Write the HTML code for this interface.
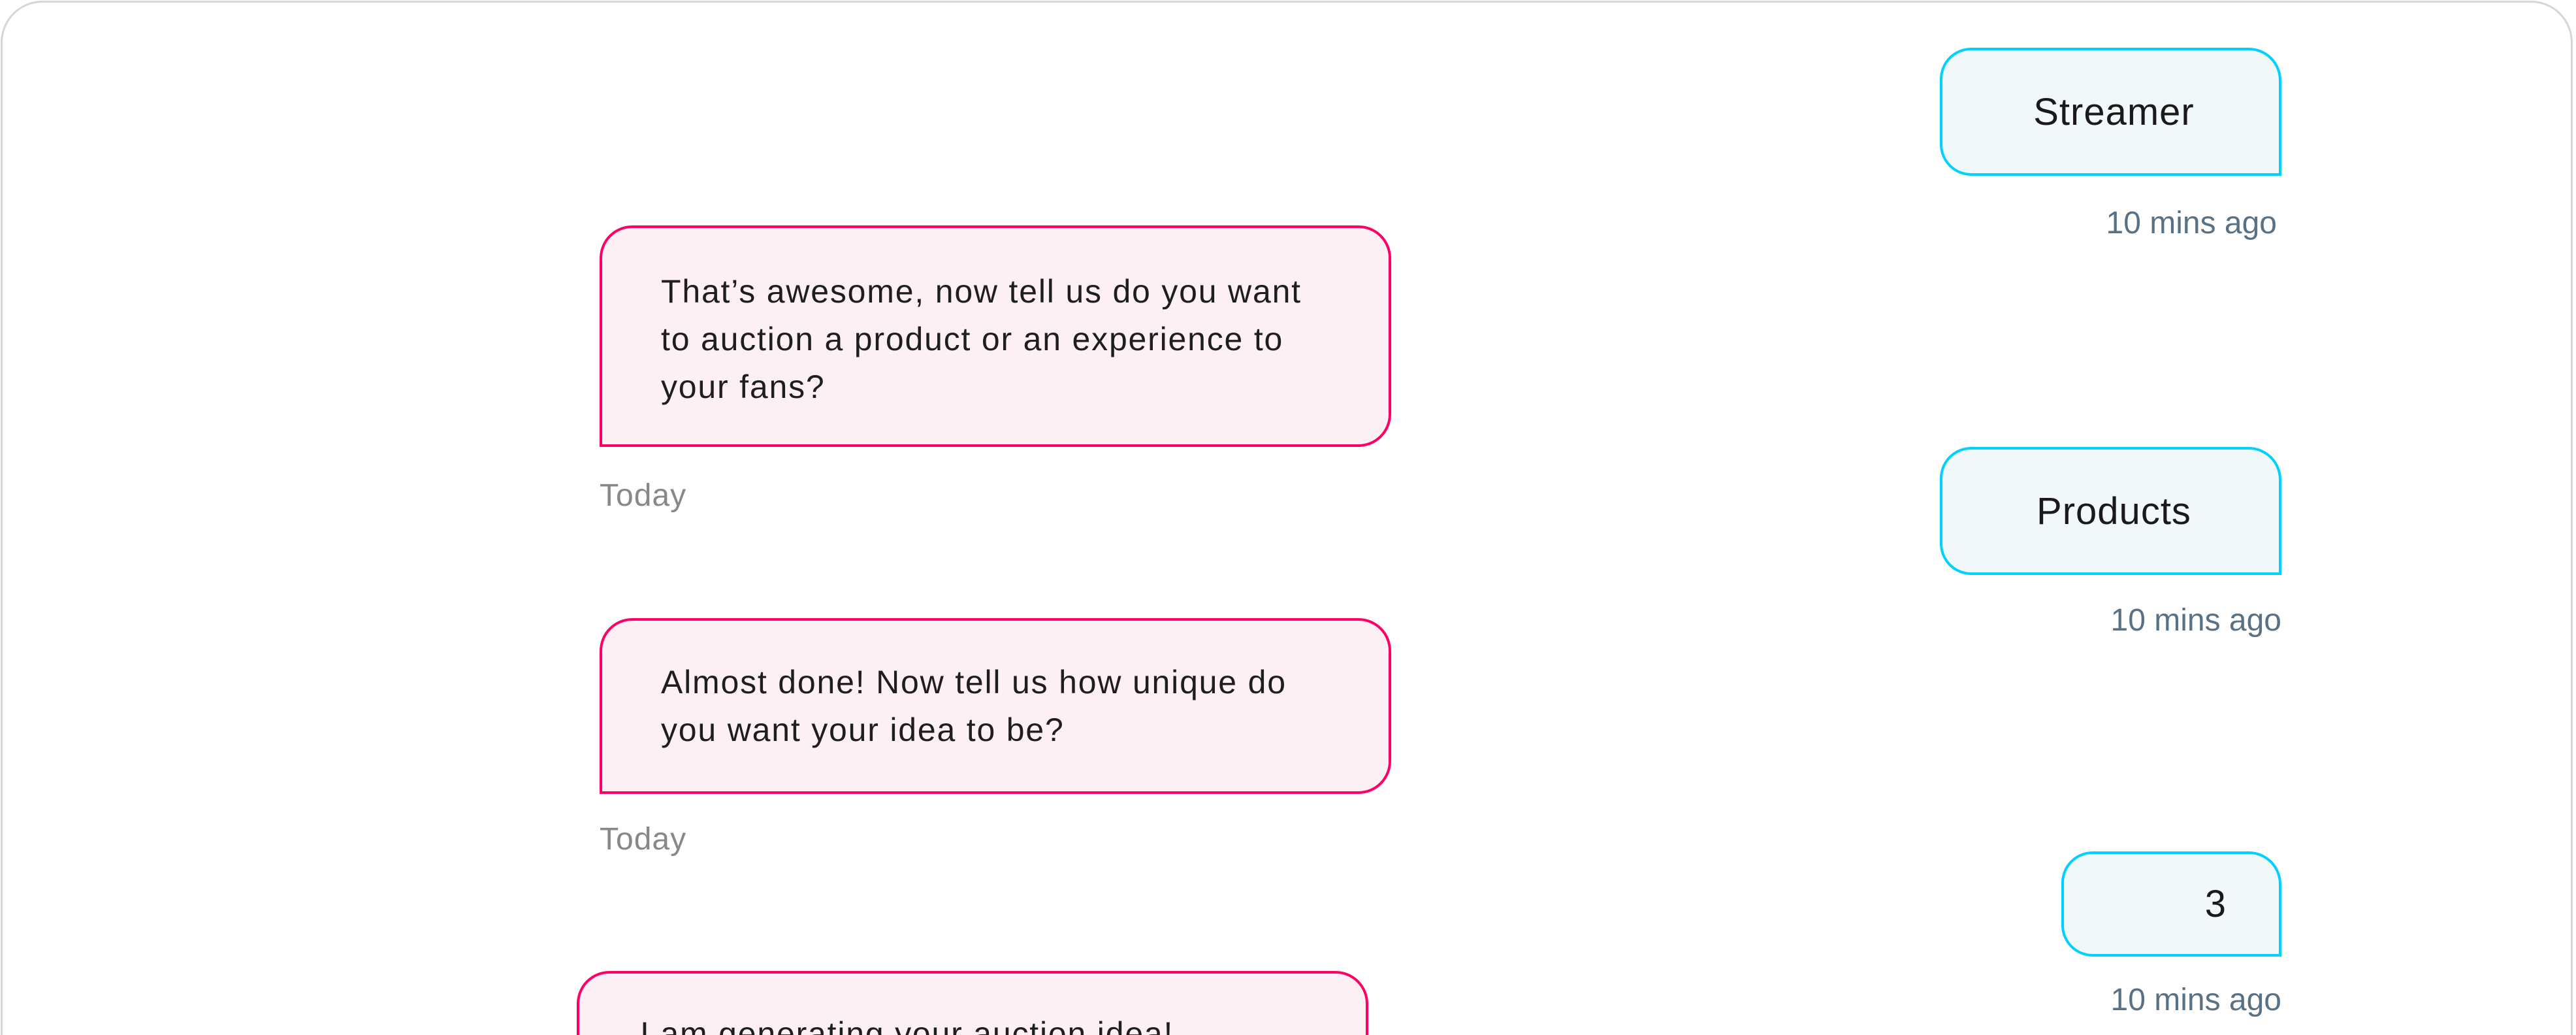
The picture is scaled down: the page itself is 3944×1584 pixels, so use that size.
<!DOCTYPE html>
<html><head><meta charset="utf-8"><style>
html,body{margin:0;padding:0;background:#fff;width:3944px;height:1584px;overflow:hidden;font-family:"Liberation Sans",sans-serif}
.wrap{position:absolute;left:0;top:0;width:3944px;height:1584px;overflow:hidden}
.frame{position:absolute;left:1px;top:1px;width:3938px;height:1660px;border:3px solid #d6d6d6;border-radius:64px;box-sizing:border-box}
.u{position:absolute;background:#f0f8fa;border:4px solid #00d1ff;box-sizing:border-box;border-radius:48px 50px 0 48px;color:#1a1a1a;font-size:58px;display:flex;align-items:center;justify-content:center;letter-spacing:1px}
.p{position:absolute;background:#fdf0f5;border:4px solid #ff0066;box-sizing:border-box;border-radius:50px 50px 50px 0;color:#1e1e1e;font-size:50px;letter-spacing:1.8px;line-height:73px;padding-left:90px}
.t{position:absolute;font-size:48px;color:#5a7184;line-height:60px}
.d{position:absolute;font-size:48px;color:#888;line-height:60px;letter-spacing:1px}
</style></head><body><div class="wrap">
<div class="frame"></div>

<div class="u" style="left:2970px;top:73px;width:523px;height:196px;padding-left:10px">Streamer</div>
<div class="t" style="right:458px;top:312px">10 mins ago</div>

<div class="u" style="left:2970px;top:684px;width:523px;height:196px;padding-left:10px">Products</div>
<div class="t" style="right:451px;top:920px">10 mins ago</div>

<div class="u" style="left:3156px;top:1303px;width:337px;height:161px;justify-content:flex-end;padding-right:80px">3</div>
<div class="t" style="right:451px;top:1501px">10 mins ago</div>

<div class="p" style="left:918px;top:345px;width:1212px;height:339px;padding-top:61px;box-sizing:border-box">That’s awesome, now tell us do you want<br>to auction a product or an experience to<br>your fans?</div>
<div class="d" style="left:918px;top:729px">Today</div>

<div class="p" style="left:918px;top:946px;width:1212px;height:269px;padding-top:58px;box-sizing:border-box">Almost done! Now tell us how unique do<br>you want your idea to be?</div>
<div class="d" style="left:918px;top:1255px">Today</div>

<div class="p" style="left:883px;top:1486px;width:1212px;height:200px;padding-top:56px;padding-left:93px;box-sizing:border-box;border-radius:50px 50px 50px 0">I am generating your auction idea!</div>
</div></body></html>
